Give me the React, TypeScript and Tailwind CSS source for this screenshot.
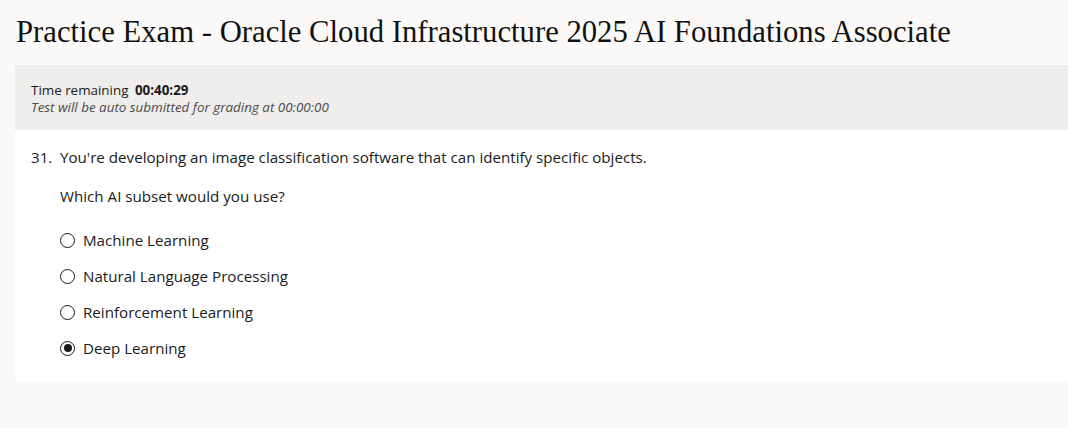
import React, { useState } from "react";

const options = [
  "Machine Learning",
  "Natural Language Processing",
  "Reinforcement Learning",
  "Deep Learning",
];

const Radio: React.FC<{ checked: boolean }> = ({ checked }) => (
  <span className="w-[15px] h-[15px] rounded-full border border-[#1b1b1b] flex items-center justify-center shrink-0">
    {checked && <span className="w-[8px] h-[8px] rounded-full bg-[#1b1b1b]" />}
  </span>
);

export default function App() {
  const [answer, setAnswer] = useState(3);

  return (
    <div className="min-h-[428px] bg-[#faf9f8] text-[#1b1b1b] font-['Open_Sans',sans-serif]">
      <h1 className="h-[65px] pl-[16px] pt-[13px] text-[30.7px] leading-[38px] whitespace-nowrap font-['Liberation_Serif',Georgia,serif] text-[#111]">
        Practice Exam - Oracle Cloud Infrastructure 2025 AI Foundations Associate
      </h1>

      <div className="ml-[15px]">
        {/* timer bar */}
        <div className="h-[65px] bg-[#efeeec] pl-[16px] pt-[17px] text-[13.4px] leading-[17px]">
          <div>
            Time remaining <span className="font-bold ml-[3px]">00:40:29</span>
          </div>
          <div className="italic text-[#4a4a4a]">Test will be auto submitted for grading at 00:00:00</div>
        </div>

        {/* question */}
        <div className="bg-white h-[252px] pt-[16px] text-[15.15px] leading-[22px]">
          <div className="flex pl-[16px]">
            <span className="w-[29px]">31.</span>
            <span>You're developing an image classification software that can identify specific objects.</span>
          </div>
          <p className="pl-[45px] mt-[17px]">Which AI subset would you use?</p>
          <div className="pl-[45px] mt-[22px] flex flex-col gap-[14px]">
            {options.map((o, i) => (
              <label key={o} className="flex items-center gap-[8px] cursor-pointer" onClick={() => setAnswer(i)}>
                <Radio checked={answer === i} />
                <span>{o}</span>
              </label>
            ))}
          </div>
        </div>
      </div>
    </div>
  );
}
